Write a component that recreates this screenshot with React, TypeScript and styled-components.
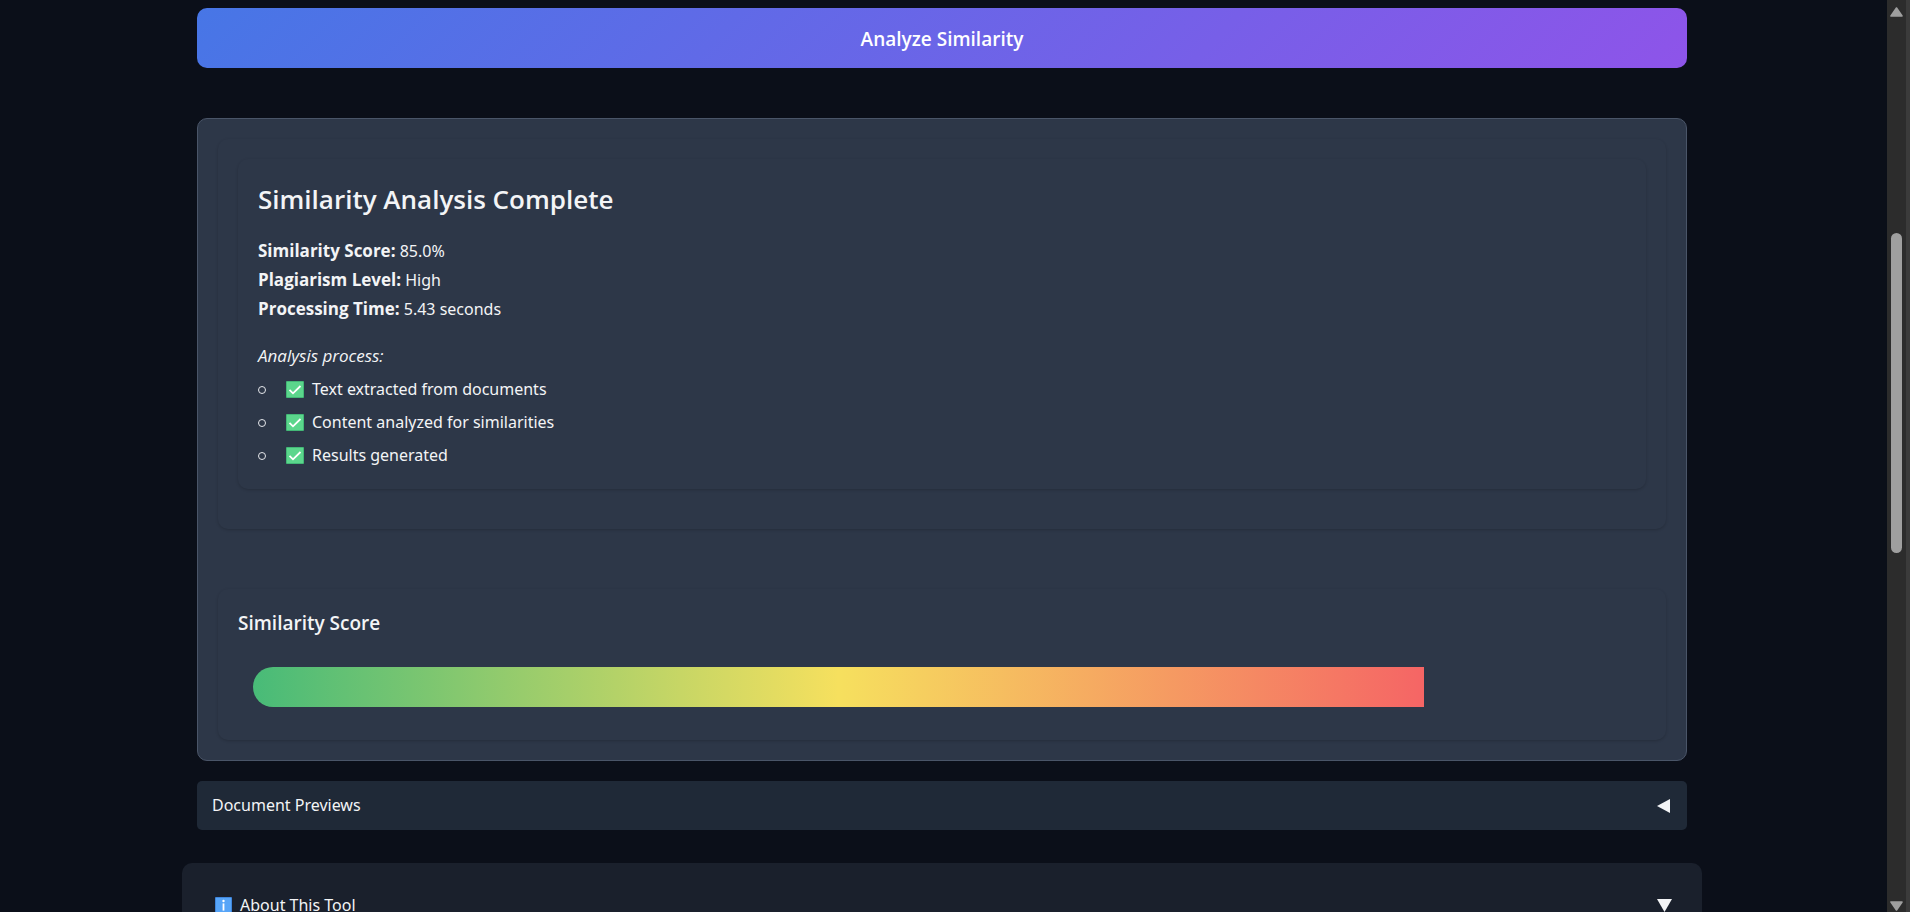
import React, { useState } from "react";
import styled, { createGlobalStyle, css } from "styled-components";

const GlobalStyle = createGlobalStyle`
  *, *::before, *::after { box-sizing: border-box; }
  body {
    margin: 0;
    background: #0b0f19;
    color: #f3f4f6;
    font-family: "Segoe UI", "Noto Sans", "Open Sans", sans-serif;
    font-size: 16px;
    line-height: 29px;
  }
  h2, h3, p, ul { margin: 0; }
  button { font: inherit; color: inherit; border: 0; cursor: pointer; }
`;

const accentFont = css`
  font-family: "Segoe UI", "Open Sans", "Noto Sans", sans-serif;
`;

const headingFont = css`
  ${accentFont}
  font-weight: 600;
`;

const Window = styled.div`
  display: flex;
  height: 100vh;
  overflow: hidden;
`;

const Page = styled.main`
  flex: 1;
  min-width: 0;
  padding: 8px 3px 0 0;
  overflow: hidden;
`;

const Container = styled.div`
  max-width: 1520px;
  margin: 0 auto;
`;

const Content = styled.div`
  display: flex;
  flex-direction: column;
  padding: 0 15px;
`;

const AnalyzeButton = styled.button`
  ${headingFont}
  height: 60px;
  padding: 2px 0 0;
  border-radius: 10px;
  background: linear-gradient(135deg, #4776e6 0%, #8e54e9 100%);
  color: #ffffff;
  font-size: 19px;
`;

const Results = styled.section`
  margin-top: 50px;
  padding: 20px;
  border: 1px solid #4a5568;
  border-radius: 10px;
  background: #2d3748;
`;

const Card = styled.div<{ $pad: string }>`
  padding: ${(p) => p.$pad};
  border-radius: 10px;
  box-shadow: 0 1px 3px rgba(0, 0, 0, 0.18);
`;

const Title = styled.h2`
  ${headingFont}
  font-size: 26px;
  line-height: 40px;
`;

const Facts = styled.p`
  margin-top: 17px;
`;

const Fact = styled.span`
  display: block;
  height: 29px;

  strong {
    ${accentFont}
    font-size: 17px;
  }
`;

const ProcessLabel = styled.p`
  ${accentFont}
  margin-top: 18px;
  font-size: 17px;
  font-style: italic;
`;

const Steps = styled.ul`
  padding: 3px 0 0;
  list-style: none;
`;

const Step = styled.li`
  display: flex;
  align-items: center;
  height: 33px;

  &::before {
    content: "";
    width: 8px;
    height: 8px;
    margin-right: 20px;
    border: 1px solid #e5e7eb;
    border-radius: 50%;
  }

  svg { margin-right: 8px; }
`;

const ScoreCard = styled(Card)`
  margin-top: 60px;
`;

const ScoreTitle = styled.h3`
  ${headingFont}
  font-size: 19px;
  line-height: 29px;
`;

const Meter = styled.div`
  height: 40px;
  margin: 29px 15px 13px;
  border-radius: 20px;
  overflow: hidden;
`;

const MeterFill = styled.div`
  height: 100%;
  background: linear-gradient(90deg, #48bb78, #f6e05e, #f56565);
`;

const toggle = css`
  display: flex;
  align-items: center;
  justify-content: space-between;
  width: 100%;
  text-align: left;
`;

const PreviewsToggle = styled.button`
  ${toggle}
  height: 49px;
  margin-top: 20px;
  padding: 0 15px;
  border-radius: 5px;
  background: #1f2937;
`;

const About = styled.section`
  margin-top: 33px;
  padding: 28px 30px;
  border-radius: 10px;
  background: #1a202c;
`;

const AboutToggle = styled.button`
  ${toggle}
  padding: 0 0 0 3px;
  background: transparent;
`;

const Label = styled.span`
  display: flex;
  align-items: center;
  gap: 8px;
`;

const ScrollRail = styled.div`
  display: flex;
  flex-direction: column;
  align-items: center;
  width: 23px;
  padding: 7px 4px 1px 0;
  background: linear-gradient(90deg, #2c2c2c 19px, #3b3b3b 19px);
`;

const ScrollTrack = styled.div`
  flex: 1;
  width: 11px;
  padding-top: 216px;
`;

const ScrollThumb = styled.div`
  height: 320px;
  border-radius: 6px;
  background: #9f9f9f;
`;

const CheckMark = () => (
  <svg width="18" height="17" viewBox="0 0 18 17" aria-hidden="true">
    <rect width="18" height="17" rx="1" fill="#43b877" />
    <rect x="1" y="1" width="16" height="15" fill="#5bd68c" />
    <path d="M3.5 8.8 7 12.3 14.5 5" fill="none" stroke="#fff" strokeWidth="1.8" />
  </svg>
);

const InfoMark = () => (
  <svg width="17" height="17" viewBox="0 0 17 17" aria-hidden="true">
    <rect width="17" height="17" rx="1" fill="#3f86dc" />
    <rect x="1" y="1" width="15" height="15" fill="#57a5f8" />
    <circle cx="8.5" cy="4" r="1.2" fill="#fff" />
    <path d="M8.5 6.4v7.2" fill="none" stroke="#fff" strokeWidth="1.8" />
  </svg>
);

const Caret = ({ open }: { open: boolean }) =>
  open ? (
    <svg width="15" height="13" viewBox="0 0 15 13" aria-hidden="true">
      <path d="M0 0h15L7.5 13z" fill="#f3f4f6" />
    </svg>
  ) : (
    <svg width="15" height="14" viewBox="0 0 15 14" aria-hidden="true">
      <path d="M13 0v14L0 7z" fill="#f3f4f6" />
    </svg>
  );

const ScrollArrow = ({ down }: { down?: boolean }) => (
  <svg width="13" height="10" viewBox="0 0 13 10" aria-hidden="true">
    <path
      d={down ? "M1 1h11L6.5 9z" : "M1 9h11L6.5 1z"}
      fill="#9f9f9f"
      stroke="#9f9f9f"
      strokeWidth="1.6"
      strokeLinejoin="round"
    />
  </svg>
);

const facts = [
  ["Similarity Score:", "85.0%"],
  ["Plagiarism Level:", "High"],
  ["Processing Time:", "5.43 seconds"],
];

const steps = [
  "Text extracted from documents",
  "Content analyzed for similarities",
  "Results generated",
];

export default function App() {
  const score = 85;
  const [previewsOpen, setPreviewsOpen] = useState(false);
  const [aboutOpen, setAboutOpen] = useState(true);

  return (
    <Window>
      <GlobalStyle />
      <Page>
        <Container>
          <Content>
            <AnalyzeButton type="button">Analyze Similarity</AnalyzeButton>
            <Results>
              <Card $pad="20px 20px 40px">
                <Card $pad="20px 20px 17px">
                  <Title>Similarity Analysis Complete</Title>
                  <Facts>
                    {facts.map(([name, value]) => (
                      <Fact key={name}>
                        <strong>{name}</strong> {value}
                      </Fact>
                    ))}
                  </Facts>
                  <ProcessLabel>Analysis process:</ProcessLabel>
                  <Steps>
                    {steps.map((s) => (
                      <Step key={s}>
                        <CheckMark />
                        {s}
                      </Step>
                    ))}
                  </Steps>
                </Card>
              </Card>
              <ScoreCard $pad="20px">
                <ScoreTitle>Similarity Score</ScoreTitle>
                <Meter
                  role="meter"
                  aria-label="Similarity Score"
                  aria-valuemin={0}
                  aria-valuemax={100}
                  aria-valuenow={score}
                >
                  <MeterFill style={{ width: `${score}%` }} />
                </Meter>
              </ScoreCard>
            </Results>
            <PreviewsToggle
              type="button"
              aria-expanded={previewsOpen}
              onClick={() => setPreviewsOpen(!previewsOpen)}
            >
              Document Previews
              <Caret open={previewsOpen} />
            </PreviewsToggle>
          </Content>
          <About>
            <AboutToggle
              type="button"
              aria-expanded={aboutOpen}
              onClick={() => setAboutOpen(!aboutOpen)}
            >
              <Label>
                <InfoMark />
                About This Tool
              </Label>
              <Caret open={aboutOpen} />
            </AboutToggle>
          </About>
        </Container>
      </Page>
      <ScrollRail aria-hidden="true">
        <ScrollArrow />
        <ScrollTrack>
          <ScrollThumb />
        </ScrollTrack>
        <ScrollArrow down />
      </ScrollRail>
    </Window>
  );
}
